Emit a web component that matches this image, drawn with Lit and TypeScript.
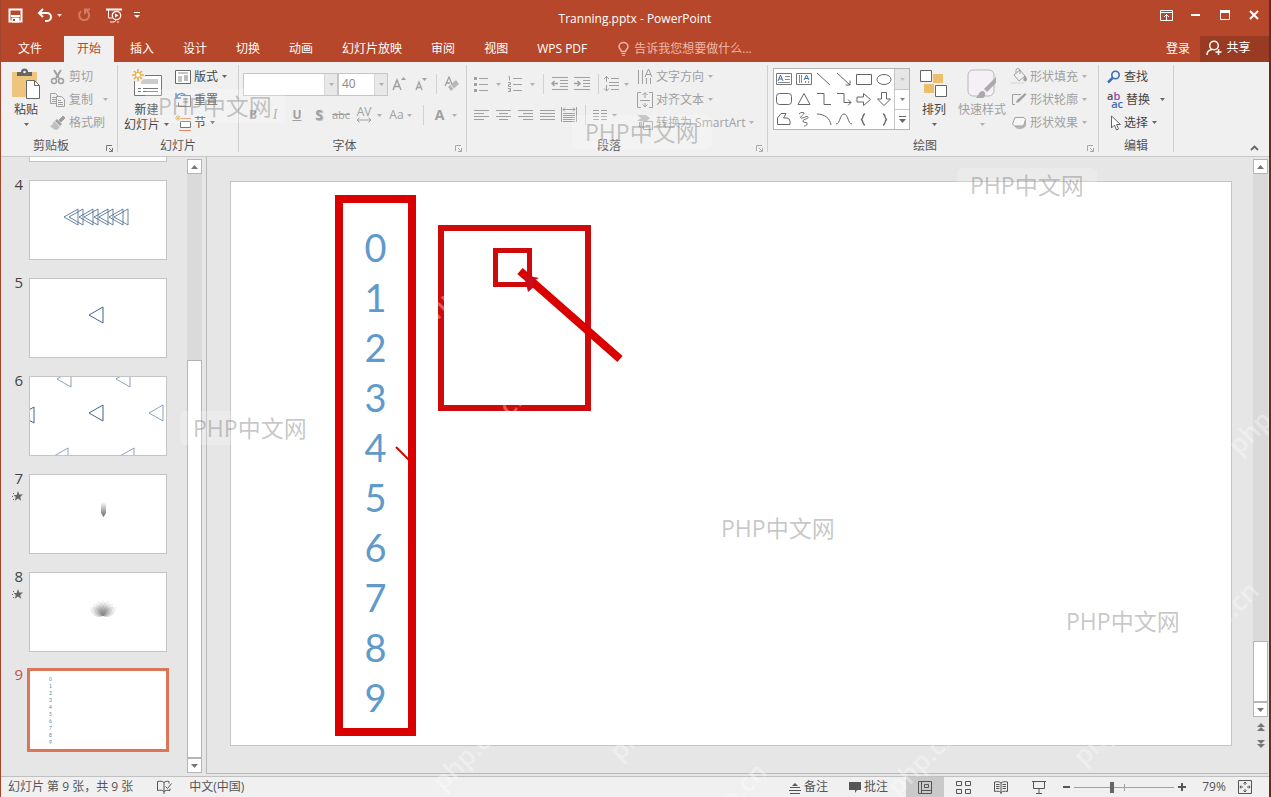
import { LitElement, html, svg, css, nothing, TemplateResult } from "lit";
import { customElement, property } from "lit/decorators.js";

const icon = (w: number, h: number, body: unknown, box = `0 0 ${w} ${h}`) =>
  html`<svg class="icon" width=${w} height=${h} viewBox=${box} fill="none" stroke="currentColor" stroke-width="1" aria-hidden="true">${body}</svg>`;

const caret = () =>
  html`<svg class="caret" width="5" height="3" viewBox="0 0 5 3" aria-hidden="true"><path d="M0 0h5L2.5 3z" fill="currentColor"></path></svg>`;

const rows = (list: number[][]) => svg`${list.map(([x1, x2, y]) => svg`<path d="M${x1} ${y}H${x2}"></path>`)}`;

const icons = {
  save: () => icon(15, 15, svg`<path d="M1.5 1.5h12v12h-12z" stroke-width="2"></path><path d="M3 8h9" stroke-width="2"></path><path d="M4 10h7v4H4z" fill="currentColor"></path><path d="M5 11h2v2H5z" fill="#b7472a" stroke="none"></path>`),
  undo: () => icon(16, 14, svg`<path d="M2 5h8a4 4 0 0 1 0 8H8" stroke-width="2"></path><path d="M6 1 2 5l4 4" stroke-width="2"></path>`),
  redo: () => icon(14, 14, svg`<path d="M9 2.500a5 5 0 1 1-5 .8" stroke-width="2"></path><path d="M8 6V1.500h5" stroke-width="2"></path>`),
  present: () => icon(18, 15, svg`<path d="M1 1.500h16" stroke-width="2"></path><path d="M3.500 2v8h4M5 14h4l2-1.500M12 14h2"></path><circle cx="11.500" cy="7.500" r="4.200" stroke-width="1.300"></circle><path d="M10 5.500v4l3.500-2z" fill="currentColor" stroke="none"></path>`),
  customize: () => icon(6, 7, svg`<path d="M0 .5h6"></path><path d="M0 3h6L3 6z" fill="currentColor" stroke="none"></path>`),
  ribbonOptions: () => icon(13, 11, svg`<path d="M.5.5h12v10H.5zM.5 2.500h12M6.500 10V4.500M4 7l2.500-2.500L9 7"></path>`),
  minimize: () => icon(9, 2, svg`<path d="M0 1h9" stroke-width="2"></path>`),
  maximize: () => icon(10, 10, svg`<path d="M.5.5h9v9h-9z"></path><path d="M0 1.500h10" stroke-width="3"></path>`),
  close: () => icon(10, 10, svg`<path d="m1 1 8 8M9 1 1 9" stroke-width="2"></path>`),
  bulb: () => icon(11, 14, svg`<path d="M3.500 9.500C3.500 8 1 7 1 4.800a4.500 4.200 0 0 1 9 0C10 7 7.500 8 7.500 9.500z" stroke-width="1.500"></path><path d="M3.500 11.500h4M4 13.300h3"></path>`),
  person: () => icon(16, 16, svg`<circle cx="8" cy="5.500" r="4.300" stroke-width="1.500"></circle><path d="M1 15c0-3 2-5 5-5.500M12.500 9v6M9.500 12h6" stroke-width="1.500"></path>`),
  paste: () => icon(28, 30, svg`<path d="M0 3h25v25H0z" fill="#edc57c" stroke="none"></path><path d="M5 7V3h4a3.500 3.500 0 0 1 7 0h4v4z" fill="#666" stroke="none"></path><circle cx="12.500" cy="3" r="1.300" fill="#f0f0f0" stroke="none"></circle><path d="M14.500 11.500h8l5 5v13h-13z" fill="#fff" stroke="#666"></path><path d="M22.500 11.500v5h5" stroke="#666"></path>`),
  cut: () => icon(16, 16, svg`<path d="M4 1l5 8M11 1 6 9" stroke-width="2"></path><circle cx="4" cy="12" r="2.500" stroke-width="1.500"></circle><circle cx="11" cy="12" r="2.500" stroke-width="1.500"></circle>`),
  copy: () => icon(16, 16, svg`<path d="M.5 1.500h5l3 3v7h-8zM2 5.500h4M2 7.500h4M2 9.500h4"></path><path d="M6.500 4.500h5l3 3v7h-8z" fill="#f0f0f0"></path><path d="M8 8.500h3M8 10.500h5M8 12.500h5"></path>`),
  brush: () => icon(16, 16, svg`<path d="m13 1 2 2-4 4-2-2z" fill="currentColor"></path><path d="m7 4 5 5-2 2-5-5z" fill="currentColor" stroke="none"></path><path d="m4 6 6 6-3 3c-3 0-5-2-7-4 2 0 3-3 4-5z" fill="currentColor" stroke="none" opacity=".6"></path>`),
  newSlide: () => icon(32, 30, svg`<path d="M3.500 6.500h27v20h-27z" fill="#fff" stroke="#777"></path><path d="M10 10h17v5H10z" fill="#ccc" stroke="none"></path><path d="M7 19.500h3m2 0h15M7 22.500h3m2 0h15" stroke="#777"></path><circle cx="7" cy="6" r="7" fill="#f0f0f0" stroke="none"></circle><path d="M7 0v12M1 6h12M3 2l8 8M11 2l-8 8" stroke="#e8ac45" stroke-width="1.500"></path><circle cx="7" cy="6" r="2.500" fill="#fff" stroke="#e8ac45"></circle>`),
  layout: () => icon(16, 16, svg`<path d="M.5 1.500h15v13H.5z" fill="#fff" stroke="#666"></path><path d="M3 4h10M3 8h4M3 10h4M3 12h4" stroke="#888"></path><path d="M9 6h4v6H9z" fill="#bbb" stroke="none"></path>`),
  reset: () => icon(16, 16, svg`<path d="M5.500 3.500h10v11H3.500v-4M8 7h5M8 10h5" stroke="#777"></path><path d="M1 1v5h5M1 6c2-5 7-6 10-2" stroke="#4a80bd" stroke-width="1.500"></path>`),
  section: () => icon(16, 16, svg`<path d="M6 3.500h10M4 15.500h12" stroke="#e08b6d"></path><path d="M5.500 6.500h10v6h-10z" fill="#fff" stroke="#777"></path><path d="M3 0v6M0 3h6M1 1l4 4M5 1 1 5" stroke="#e8ac45"></path>`),
  grow: () => icon(14, 16, svg`<path d="M1 14 5 4l4 10M2.500 10.500h5" stroke-width="1.500"></path><path d="M9 4h5l-2.500-3z" fill="currentColor" stroke="none"></path>`),
  shrink: () => icon(14, 16, svg`<path d="M2 14 5 6l3 8M3 11.500h4" stroke-width="1.300"></path><path d="M8 2h5l-2.500 3z" fill="currentColor" stroke="none"></path>`),
  clear: () => icon(16, 16, svg`<path d="M1 10 5 1l3 7M2 7h4" stroke-width="1.300"></path><path d="m4 11 8-7 3 4-8 7z" fill="currentColor" opacity=".7" stroke="none"></path><path d="m7 9 3 4" stroke="#f0f0f0"></path>`),
  spacing: () => icon(16, 6, svg`<path d="M1 3h14M3.500.5 1 3l2.500 2.500M12.500.5 15 3l-2.500 2.500"></path>`),
  bullets: () => icon(14, 16, svg`<path d="M0 1h3v3H0zM0 7h3v3H0zM0 13h3v3H0z" fill="currentColor" stroke="none"></path>${rows([[5, 14, 2.5], [5, 14, 8.5], [5, 14, 14.5]])}`),
  numbering: () => icon(14, 16, svg`<path d="M.5.5h1v4M0 6.500h2.500v2H.5v2H3M0 12.500h2.500v3H0M1 14h1"></path>${rows([[5, 14, 2.5], [5, 14, 8.5], [5, 14, 14.5]])}`),
  outdent: () => icon(17, 14, svg`${rows([[1, 17, 0.5], [9, 17, 3.5], [9, 17, 6.5], [9, 17, 9.5], [1, 17, 12.5]])}<path d="M1 6.500h6M3.500 4 1 6.500 3.500 9" stroke-width="1.500"></path>`),
  indent: () => icon(17, 14, svg`${rows([[0, 16, 0.5], [9, 16, 3.5], [9, 16, 6.5], [9, 16, 9.5], [0, 16, 12.5]])}<path d="M0 6.500h6M3.500 4 6 6.500 3.500 9" stroke-width="1.500"></path>`),
  lineSpacing: () => icon(15, 16, svg`<path d="M2.500 0v6M0 3l2.500-2.500L5 3M2.500 9v6M0 12.500 2.500 15 5 12.500"></path>${rows([[7, 15, 2.5], [5, 15, 6.5], [5, 15, 9.5], [7, 15, 13.5]])}`),
  left: () => icon(15, 11, rows([[0, 15, 0.5], [0, 10, 3.5], [0, 15, 6.5], [0, 10, 9.5]])),
  center: () => icon(15, 11, rows([[0, 15, 0.5], [3, 12, 3.5], [0, 15, 6.5], [3, 12, 9.5]])),
  right: () => icon(15, 11, rows([[0, 15, 0.5], [5, 15, 3.5], [0, 15, 6.5], [5, 15, 9.5]])),
  justify: () => icon(15, 11, rows([[0, 15, 0.5], [0, 15, 3.5], [0, 15, 6.5], [0, 15, 9.5]])),
  distribute: () => icon(16, 16, svg`<path d="M.5 0v15M15.500 0v15M2 2.500h12M4 .5l-2 2 2 2M12 .5l2 2-2 2"></path>${rows([[2, 14, 6.5], [2, 14, 8.5], [2, 14, 10.5], [2, 14, 12.5], [2, 14, 14.5]])}`),
  columns: () => icon(14, 11, rows([[0, 6, 0.5], [0, 6, 3.5], [0, 6, 6.5], [0, 6, 9.5], [8, 14, 0.5], [8, 14, 3.5], [8, 14, 6.5], [8, 14, 9.5]])),
  direction: () => icon(16, 16, svg`<path d="M1.500 1v14M5.500 1v14M9.500 9v6M13.500 9v6M8 8l3.500-8L15 8M9 5.500h5"></path>`),
  alignText: () => icon(16, 16, svg`<path d="M4 .5H.5v15H4M12 .5h3.500v15H12M3 8.500h10M8 1v5M5.500 3 8 .5 10.500 3M8 11v4M5.500 12.500 8 15l2.500-2.500"></path>`),
  smartArt: () => icon(16, 16, svg`<path d="M0 0h9l4 3-3 3H0l4-3z" fill="currentColor" stroke="none" opacity=".7"></path><path d="M2.500 7v5h4M6.500 6.500h9v8h-9zM8.500 10.500h5"></path>`),
  arrange: () => icon(28, 28, svg`<path d="M13 4h10v9H13zM4 14h10v9H4z" fill="#edbf6c" stroke="none"></path><path d="M.5.5h11v11H.5zM15.500 15.500h11v11h-11z" fill="#fff" stroke="#666"></path>`),
  quickStyle: () => icon(30, 30, svg`<rect x="1" y="1" width="26" height="26" rx="5" stroke="#b8b8b8" fill="#f4f0f5"></rect><path d="M29 8v6l-9 9-3-3z" fill="#aaa" stroke="none"></path><path d="M8 29c4-1 3-7 8-7 3 1 3 5 0 7z" fill="#aaa" stroke="none"></path>`),
  fill: () => icon(16, 16, svg`<path d="m3 6 6-5 5 6-6 5z"></path><path d="M5 4V1.500a2 2 0 0 1 4 0V5"></path><path d="M14 7c2 3 2 5 0 5s-1-3 0-5z" fill="currentColor"></path><path d="M0 13h13v2H0z" fill="#e2e2e2" stroke="none"></path>`),
  outline: () => icon(16, 16, svg`<path d="M10 2.500H1.500v10H4"></path><path d="m14 1 1.500 1.500L8 10l-3 1 1-3z" fill="currentColor" stroke="none"></path>`),
  effects: () => icon(16, 16, svg`<path d="M4 8v4c2 3 8 3 11-1V5z" fill="currentColor" stroke="none" opacity=".7"></path><path d="M4 2.500h9l1.500 2-2 6.500h-9L1.500 9z" fill="#f7f7f7"></path>`),
  find: () => icon(14, 14, svg`<circle cx="8.500" cy="5" r="3.700" stroke="#3c6fb0" stroke-width="1.600"></circle><path d="m5.500 8-4.500 4.500" stroke="#3c6fb0" stroke-width="2.500"></path>`),
  pointer: () => icon(14, 16, svg`<path d="M4.500 1v12l3-3 2 5 2-1-2-4.500h4z" fill="#fff" stroke="#666"></path>`),
  spell: () => icon(15, 14, svg`<path d="M7 2.500C5.500 1 3 1 .5 1.500v9c2.500-.5 5-.5 6.500 1M7 2.500c1-1 3-1.500 5-1v2M7 2.500V14M7 11.500c1-1 3-1.500 6-1v-2M8.500 6.500l2 2 4-5"></path>`),
  notes: () => icon(12, 13, svg`<path d="M3 5h6L6 2z" fill="currentColor" stroke="none"></path>${rows([[1, 11, 6.5], [0, 12, 9.5], [1, 11, 12.5]])}`),
  comment: () => icon(12, 12, svg`<path d="M0 1h12v8H8l-2 3v-3H0z" fill="currentColor" stroke="none"></path>`),
  normal: () => icon(14, 13, svg`<path d="M.5.5h13v12H.5zM3.500 1v11M3.500 9.500h10M6.500 3.500h4v3h-4z"></path>`),
  sorter: () => icon(15, 13, svg`<path d="M.5.5h5v4h-5zM9.500.5h5v4h-5zM.5 8.500h5v4h-5zM9.500 8.500h5v4h-5z"></path>`),
  reading: () => icon(14, 13, svg`<path d="M.5 1C3 .5 5.500.5 7 2c1.500-1.500 4-1.500 6.500-1v9.500C11 10 8.500 10 7 11.500 5.500 10 3 10 .5 10.500zM7 2v11M2 3.500h3.500M2 5.500h3.500M2 7.500h3.500M8.500 3.500H12M8.500 5.500H12M8.500 7.500H12"></path>`),
  show: () => icon(14, 13, svg`<path d="M0 .5h14M1.500 1v6.500h11V1M7 8v4M4 12.500h6"></path>`),
  fit: () => icon(14, 14, svg`<path d="M.5.5h13v13H.5zM7 2v3M5.500 3.500 7 2l1.500 1.500M7 12V9M5.500 10.500 7 12l1.500-1.500M2 7h3M3 5.500 2 7l1 1.500M12 7H9M11 5.500 12 7l-1 1.500"></path>`),
  launcher: () => icon(7, 7, svg`<path d="M.5 6V.5H6M3 3l3.500 3.500M6.500 3v3.500H3"></path>`),
  chevronUp: () => icon(9, 6, svg`<path d="M1 5l3.500-3.500L8 5" stroke-width="1.800"></path>`),
  up: () => icon(7, 4, svg`<path d="M0 4h7L3.500 0z" fill="currentColor" stroke="none"></path>`),
  down: () => icon(7, 4, svg`<path d="M0 0h7L3.500 4z" fill="currentColor" stroke="none"></path>`),
  prev: () => icon(8, 8, svg`<path d="M0 4h8L4 0zM0 8h8L4 4z" fill="currentColor" stroke="none"></path>`),
  next: () => icon(8, 8, svg`<path d="M0 0h8L4 4zM0 4h8L4 8z" fill="currentColor" stroke="none"></path>`),
  more: () => icon(7, 7, svg`<path d="M0 .5h7"></path><path d="M0 3h7L3.500 7z" fill="currentColor" stroke="none"></path>`),
  star: () => icon(11, 10, svg`<path d="m6 0 1.300 3.600H11L8.200 5.900l1 3.900L6 7.500 2.800 9.800l1-3.900L1.500 4h3.200z" fill="currentColor" stroke="none"></path><path d="M1 2.500h1M0 5.500h1M1 8.500h1"></path>`),
};

const shapes: TemplateResult[] = [
  svg`<path d="M.5 2.500h15v11H.5z" stroke="#777"></path><path d="m2 10 2.500-6L7 10M3 8h3" stroke="#3c6fb0"></path><path d="M9 5.500h5M9 8.500h5M2 11.500h12" stroke="#888"></path>`,
  svg`<path d="M.5 2.500h15v11H.5z" stroke="#777"></path><path d="m8 9 2.500-5L13 9M9 7.500h3" stroke="#3c6fb0"></path><path d="M3.500 4v8M5.500 4v8M9.500 10v2M12.500 10v2" stroke="#888"></path>`,
  svg`<path d="m1 2 13 12"></path>`,
  svg`<path d="m1 2 13 12M14 9.500V14H9.500"></path>`,
  svg`<path d="M.5 3.500h15v10H.5z"></path>`,
  svg`<ellipse cx="8" cy="8.500" rx="7" ry="5"></ellipse>`,
  svg`<rect x=".5" y="2.500" width="15" height="11" rx="3"></rect>`,
  svg`<path d="m8 2.500 6 11H2z"></path>`,
  svg`<path d="M1 2.500h7v11h7"></path>`,
  svg`<path d="M1 2.500h7v9h7M12 8.500l3 3-3 3"></path>`,
  svg`<path d="M1 6h6.500V2.500L14.500 8.500l-7 6V11H1z"></path>`,
  svg`<path d="M5.500 1.500h5V8h4L8 14.500 1.500 8h4z"></path>`,
  svg`<path d="M1.500 13.500V7L5 2.500h5L7.500 7H11a3.500 3.500 0 0 1 3 3.500v3z"></path>`,
  svg`<path d="M3 3c2-2 4-2 5-1s-5 4-3 5 6-3 7-1-5 2-5 4 3 1 4 2-1 3-3 3"></path>`,
  svg`<path d="M1 3c7 0 13 4 14 11"></path>`,
  svg`<path d="M0 13c4 0 4-10 8-10s4 10 8 10"></path>`,
  svg`<path d="M9 3C6 3 8 8 5 8.500 8 9 6 14 9 14" stroke-width="1.300"></path>`,
  svg`<path d="M7 3c3 0 1 5 4 5.500C8 9 10 14 7 14" stroke-width="1.300"></path>`,
];

const shared = css`
  :host { box-sizing: border-box; }
  *, *::before, *::after { box-sizing: border-box; }
  button, select, input { font: inherit; color: inherit; margin: 0; }
  button {
    display: inline-flex; align-items: center; justify-content: center;
    padding: 0; border: 0; background: none; white-space: nowrap;
  }
  svg { display: block; flex: none; overflow: visible; }
`;

@customElement("ribbon-group")
class RibbonGroup extends LitElement {
  @property() label = "";
  @property({ type: Boolean }) launcher = false;
  @property({ type: Boolean }) dim = false;

  static styles = [shared, css`
    :host {
      display: flex; flex-direction: column; flex: none;
      margin: 3px 0 4px; border-right: 1px solid #cfcfcf;
    }
    .content { display: flex; height: 69px; }
    .footer { display: flex; height: 18px; align-items: flex-start; }
    .label { flex: 1; text-align: center; line-height: 24px; color: #555; }
    .open { width: 16px; height: 22px; padding-top: 7px; color: #777; }
    .open.dim { color: #aaa; }
  `];

  render() {
    return html`
      <div class="content"><slot></slot></div>
      <div class="footer">
        <span class="label">${this.label}</span>
        ${this.launcher ? html`<button class=${this.dim ? "open dim" : "open"} aria-label=${this.label}>${icons.launcher()}</button>` : nothing}
      </div>`;
  }
}

@customElement("scroll-bar")
class ScrollBar extends LitElement {
  @property({ type: Number }) before = 0;
  @property({ type: Number }) size = 1;
  @property({ type: Number }) after = 0;
  @property({ type: Boolean }) paging = false;

  static styles = [shared, css`
    :host { display: flex; flex-direction: column; flex: none; width: 15px; padding: 2px 0 3px; color: #777; }
    .step { flex: none; width: 15px; height: 15px; background: #fff; border: 1px solid #b5b5b5; }
    .track { flex: 1; display: flex; flex-direction: column; background: #dadada; }
    .thumb { background: #fff; border: 1px solid #b5b5b5; }
    .page { flex: none; height: 17px; }
    .pages { display: flex; flex-direction: column; padding: 1px 0 18px; }
  `];

  render() {
    return html`
      <button class="step" aria-label="向上滚动">${icons.up()}</button>
      <div class="track">
        <div style="flex:${this.before}"></div>
        <div class="thumb" style="flex:${this.size}"></div>
        <div style="flex:${this.after}"></div>
      </div>
      <button class="step" aria-label="向下滚动">${icons.down()}</button>
      ${this.paging ? html`<div class="pages">
        <button class="page" aria-label="上一张">${icons.prev()}</button>
        <button class="page" aria-label="下一张">${icons.next()}</button>
      </div>` : nothing}`;
  }
}

@customElement("app-root")
class AppRoot extends LitElement {
  static styles = [shared, css`
    :host {
      display: flex; flex-direction: column; position: relative;
      height: 100vh; overflow: hidden;
      border-left: 1px solid #a4452c; border-right: 2px solid #6b2a1c;
      background: #e6e6e6; color: #444;
      font: 12px/16px "Open Sans", "Noto Sans CJK SC", sans-serif;
    }
    .titlebar { flex: none; display: grid; grid-template-columns: 1fr auto 1fr; height: 36px; background: #b7472a; color: #fff; }
    .quick { display: flex; align-items: center; height: 30px; padding-left: 7px; }
    .quick button:nth-child(2) { margin-left: 14px; gap: 4px; }
    .quick button:nth-child(3) { margin-left: 15px; color: #d27c66; }
    .quick button:nth-child(4) { margin-left: 14px; }
    .quick button:nth-child(5) { margin-left: 3px; width: 22px; }
    .title { font-size: 12px; line-height: 37px; }
    .window { display: flex; justify-content: flex-end; height: 30px; padding-right: 1px; }
    .window button { width: 29px; }
    .tabs { flex: none; display: flex; height: 26px; gap: 3px; background: #b7472a; color: #fff; }
    .tab { height: 26px; padding: 0 13px; }
    .tab.file { margin: 0 6px 0 4px; }
    .tab.active { background: #f0f0f0; color: #b7472a; }
    .tell { display: flex; align-items: center; gap: 5px; margin-left: 15px; color: #eeb9aa; }
    .account { display: flex; gap: 10px; margin-left: auto; }
    .share { width: 69px; gap: 4px; padding: 0 12px 2px 0; background: #983b22; }

    .ribbon { flex: none; display: flex; height: 95px; background: #f0f0f0; border-bottom: 1px solid #c8c8c8; }
    .g-clip { width: 117px; }
    .g-slide { width: 121px; }
    .g-font { width: 228px; }
    .g-para { width: 301px; }
    .g-draw { width: 331px; }
    .g-edit { width: 75px; }
    .collapse { margin: auto 10px 5px auto; color: #666; }
    .big { flex-direction: column; justify-content: flex-start; line-height: 15px; }
    .big .pic { display: flex; align-items: center; justify-content: center; height: 37px; }
    .big .drop { display: flex; align-items: center; gap: 4px; height: 15px; }
    .caret { opacity: 0.8; }
    .paste { width: 42px; margin-left: 4px; }
    .new { width: 55px; margin-left: 1px; }
    .new + .stack { margin-left: 1px; }
    .arrange { width: 46px; }
    .quickstyle { width: 50px; }
    .stack { display: flex; flex-direction: column; align-items: flex-start; }
    .small { height: 23px; gap: 3px; }
    .small .caret { margin-left: 1px; }
    .small.wide .caret { margin-left: 7px; }
    .off { color: #a0a0a0; }
    .pl2 { margin-left: 2px; }
    .pl3 { margin-left: 3px; }
    .pl4 { margin-left: 4px; }
    .pl5 { margin-left: 5px; }
    .pl8 { margin-left: 8px; }
    .rows { display: flex; flex-direction: column; gap: 7px; padding-top: 7px; color: #a0a0a0; }
    .row { display: flex; align-items: center; height: 24px; }
    .row button { height: 22px; }
    .row .sep { width: 1px; height: 20px; background: #d2d2d2; }
    .combo { display: grid; height: 23px; }
    .combo select {
      grid-area: 1 / 1; appearance: none; height: 23px; padding: 0 3px; border: 1px solid #c6c6c6; border-radius: 0;
      background: #fff; color: #888; opacity: 1; font-size: 12px;
    }
    .combo .arrow {
      grid-area: 1 / 1; justify-self: end; display: grid; place-items: center; width: 13px; height: 21px;
      margin: 1px; background: #e8e8e8; border-left: 1px solid #d8d8d8; pointer-events: none;
    }
    .face { width: 95px; margin-left: 4px; }
    .size { width: 50px; }
    .w16 { width: 16px; }
    .w22 { width: 22px; }
    .w29 { width: 29px; gap: 3px; }
    .w34 { width: 34px; gap: 8px; }
    .w30 { width: 30px; }
    .tight { gap: 5px; }
    .bold { font-weight: 700; }
    .italic { font-style: italic; font-family: "Liberation Serif", serif; font-size: 14px; }
    .under { font-weight: 700; text-decoration: underline; }
    .shadow { font-weight: 700; text-shadow: 1px 1px 1px #bbb; font-size: 14px; }
    .strike { text-decoration: line-through; font-size: 11px; }
    .kern { display: flex; flex-direction: column; align-items: center; font-size: 12px; line-height: 10px; }
    .fontcolor { font-weight: 700; font-size: 14px; }
    .gallery { display: flex; width: 137px; height: 62px; margin: 3px 1px 0 5px; background: #fff; border: 1px solid #b5b5b5; color: #666; }
    .shapes { flex: 1; display: grid; grid-template: repeat(3, 20px) / repeat(6, 20px); }
    .scroll { display: grid; grid-template-rows: repeat(3, 1fr); width: 15px; border-left: 1px solid #c6c6c6; }
    .scroll button + button { border-top: 1px solid #c6c6c6; }
    .scroll button:first-child { background: #e6e6e6; color: #bbb; }
    .ab { display: grid; width: 16px; font: 600 11px/8px "Open Sans", sans-serif; color: #555; text-align: left; }
    .ab span + span { color: #3c6fb0; text-align: right; }
    .ab i { font-style: normal; color: #8b4bb0; }

    .main { flex: 1; display: flex; min-height: 0; }
    .thumbs {
      flex: none; display: flex; flex-direction: column; justify-content: flex-end; gap: 18px;
      width: 186px; padding-bottom: 26px; overflow: hidden;
    }
    .thumb { flex: none; display: flex; }
    .num { width: 28px; padding-right: 6px; font-size: 15px; line-height: 8px; text-align: right; }
    .num .icon { margin: 9px 0 0 11px; color: #666; }
    .mini { width: 138px; height: 80px; background: #fff; border: 1px solid #c4c4c4; overflow: hidden; color: #41658d; }
    .selected .num { color: #c9533a; }
    .selected .mini { outline: 3px solid #dd7558; outline-offset: -1px; border-color: #dd7558; }
    .digits-mini { display: flex; flex-direction: column; align-items: flex-start; width: 100%; padding: 2px 0 0 19px; font: 5px/7px Lato, sans-serif; color: #5b83ab; }
    .editor { flex: 1; display: flex; min-width: 0; margin: 0 1px 2px 4px; border-left: 1px solid #b9b9b9; border-bottom: 1px solid #b9b9b9; }
    .desk { flex: 1; display: flex; padding: 24px 21px 27px 23px; }
    .slide { position: relative; flex: 1; background: #fff; border: 1px solid #c4c4c4; }
    .frame { position: absolute; border: 6px solid #ce0a0a; }
    .numbers { left: 104px; top: 13px; width: 81px; height: 541px; border: 8px solid #da0000; padding-top: 19px; text-align: center; font: 38px/50px Lato, sans-serif; color: #5f9acb; }
    .numbers div { height: 50px; }
    .area { left: 207px; top: 43px; width: 153px; height: 186px; }
    .spot { left: 262px; top: 66px; width: 39px; height: 39px; border-width: 5px; }
    .marks { position: absolute; left: 0; top: 0; }

    .status { flex: none; display: flex; align-items: center; height: 21px; background: #f0f0f0; border-top: 1px solid #c0c0c0; padding: 0 17px 0 7px; color: #555; }
    .status button { height: 20px; }
    .proof { margin: 0 17px 0 24px; }
    .right { display: flex; align-items: center; margin-left: auto; }
    .right .text { gap: 3px; margin-right: 21px; }
    .right .text + .text { margin-right: 18px; }
    .view { width: 38px; }
    .view.on { background: #c9c9c9; }
    .zoomstep { width: 16px; }
    .zoom { appearance: none; width: 100px; height: 12px; background: linear-gradient(#a0a0a0, #a0a0a0) center / 100% 1px no-repeat, linear-gradient(#a0a0a0, #a0a0a0) center / 1px 7px no-repeat; }
    .zoom::-webkit-slider-thumb { appearance: none; width: 4px; height: 11px; background: #666; }
    .percent { width: 48px; }

    .stamp {
      position: absolute; padding: 0 13px; border-radius: 6px; pointer-events: none; white-space: nowrap;
      background: rgba(255, 255, 255, 0.22); color: rgba(120, 120, 120, 0.42);
      font-size: 23px; line-height: 34px;
    }
    .tilt {
      position: absolute; pointer-events: none; white-space: nowrap; color: rgba(255, 255, 255, 0.35);
      font-size: 26px; font-weight: 600; line-height: 30px; transform: rotate(-45deg); transform-origin: 0 50%;
    }
  `];

  private stamps = [[144, 89], [571, 115], [956, 168], [179, 411], [707, 511], [1052, 604]];
  private tilts = [[435, 770], [612, 740], [700, 812], [890, 775], [1076, 745], [1231, 434], [1192, 631], [418, 310], [462, 435]];

  private small(label: string, pic: unknown, opts: { off?: boolean; drop?: boolean; wide?: boolean } = {}) {
    return html`<button class="small ${opts.off ? "off" : ""} ${opts.wide ? "wide" : ""}" ?disabled=${opts.off}>
      ${pic}<span>${label}</span>${opts.drop ? caret() : nothing}</button>`;
  }

  private thumb(n: number, body: unknown, star = false, selected = false) {
    return html`<div class="thumb ${selected ? "selected" : ""}">
      <div class="num">${n}${star ? icons.star() : nothing}</div>
      <button class="mini" aria-label="幻灯片 ${n}">${body}</button>
    </div>`;
  }

  private canvas(body: unknown) {
    return html`<svg width="136" height="78" viewBox="0 0 136 78" fill="none" stroke="currentColor" aria-hidden="true">${body}</svg>`;
  }

  private triangle(x: number, y: number, opacity = 1) {
    return svg`<path d="M${x} ${y}l14-8v16z" opacity=${opacity}></path>`;
  }

  render() {
    return html`
      <header class="titlebar">
        <div class="quick">
          <button aria-label="保存">${icons.save()}</button>
          <button aria-label="撤消">${icons.undo()}${caret()}</button>
          <button aria-label="恢复">${icons.redo()}</button>
          <button aria-label="从头开始">${icons.present()}</button>
          <button aria-label="自定义">${icons.customize()}</button>
        </div>
        <div class="title">Tranning.pptx - PowerPoint</div>
        <div class="window">
          <button aria-label="功能区显示选项">${icons.ribbonOptions()}</button>
          <button aria-label="最小化">${icons.minimize()}</button>
          <button aria-label="最大化">${icons.maximize()}</button>
          <button aria-label="关闭">${icons.close()}</button>
        </div>
      </header>
      <nav class="tabs">
        <button class="tab file">文件</button>
        ${["开始", "插入", "设计", "切换", "动画", "幻灯片放映", "审阅", "视图", "WPS PDF"].map(
          (t, i) => html`<button class="tab ${i === 0 ? "active" : ""}">${t}</button>`)}
        <button class="tell">${icons.bulb()}<span>告诉我您想要做什么...</span></button>
        <div class="account">
          <button>登录</button>
          <button class="share">${icons.person()}<span>共享</span></button>
        </div>
      </nav>
      <section class="ribbon">
        <ribbon-group class="g-clip" label="剪贴板" launcher>
          <button class="big paste"><span class="pic">${icons.paste()}</span><span>粘贴</span><span class="drop">${caret()}</span></button>
          <div class="stack pl3">
            ${this.small("剪切", icons.cut(), { off: true })}
            ${this.small("复制", icons.copy(), { off: true, drop: true, wide: true })}
            ${this.small("格式刷", icons.brush(), { off: true })}
          </div>
        </ribbon-group>
        <ribbon-group class="g-slide" label="幻灯片">
          <button class="big new"><span class="pic">${icons.newSlide()}</span><span>新建</span><span class="drop">幻灯片${caret()}</span></button>
          <div class="stack">
            ${this.small("版式", icons.layout(), { drop: true })}
            ${this.small("重置", icons.reset())}
            ${this.small("节", icons.section(), { drop: true })}
          </div>
        </ribbon-group>
        <ribbon-group class="g-font" label="字体" launcher dim>
          <div class="rows">
            <div class="row">
              <label class="combo face"><select aria-label="字体" disabled><option></option></select><span class="arrow">${caret()}</span></label>
              <label class="combo size"><select aria-label="字号" disabled><option>40</option></select><span class="arrow">${caret()}</span></label>
              <button class="w22" aria-label="增大字号">${icons.grow()}</button>
              <button class="w22" aria-label="减小字号">${icons.shrink()}</button>
              <span class="sep pl4"></span>
              <button class="w30" aria-label="清除格式">${icons.clear()}</button>
            </div>
            <div class="row pl3">
              <button class="w22 bold">B</button><button class="w22 italic">I</button>
              <button class="w22 under">U</button><button class="w22 shadow">S</button>
              <button class="w22 strike">abc</button>
              <button class="w34 tight"><span class="kern">AV${icons.spacing()}</span>${caret()}</button>
              <button class="w29">Aa${caret()}</button>
              <span class="sep pl8"></span>
              <button class="w34 pl5 fontcolor">A${caret()}</button>
            </div>
          </div>
        </ribbon-group>
        <ribbon-group class="g-para" label="段落" launcher dim>
          <div class="rows">
            <div class="row pl3">
              <button class="w34" aria-label="项目符号">${icons.bullets()}${caret()}</button>
              <button class="w34" aria-label="编号">${icons.numbering()}${caret()}</button>
              <span class="sep pl5"></span>
              <button class="w30" aria-label="减少缩进">${icons.outdent()}</button>
              <button class="w16" aria-label="增加缩进">${icons.indent()}</button>
              <span class="sep pl8"></span>
              <button class="w34 tight" aria-label="行距">${icons.lineSpacing()}${caret()}</button>
            </div>
            <div class="row pl3">
              <button class="w22" aria-label="左对齐">${icons.left()}</button>
              <button class="w22" aria-label="居中">${icons.center()}</button>
              <button class="w22" aria-label="右对齐">${icons.right()}</button>
              <button class="w22" aria-label="两端对齐">${icons.justify()}</button>
              <button class="w22" aria-label="分散对齐">${icons.distribute()}</button>
              <span class="sep pl5"></span>
              <button class="w34 pl2 tight" aria-label="分栏">${icons.columns()}${caret()}</button>
            </div>
          </div>
          <div class="stack pl4">
            ${this.small("文字方向", icons.direction(), { off: true, drop: true })}
            ${this.small("对齐文本", icons.alignText(), { off: true, drop: true })}
            ${this.small("转换为 SmartArt", icons.smartArt(), { off: true, drop: true })}
          </div>
        </ribbon-group>
        <ribbon-group class="g-draw" label="绘图" launcher dim>
          <div class="gallery">
            <div class="shapes">${shapes.map((s) => html`<button aria-label="形状">${icon(16, 16, s)}</button>`)}</div>
            <div class="scroll">
              <button aria-label="上一行">${caret()}</button>
              <button aria-label="下一行">${caret()}</button>
              <button aria-label="其他">${icons.more()}</button>
            </div>
          </div>
          <button class="big arrange"><span class="pic">${icons.arrange()}</span><span>排列</span><span class="drop">${caret()}</span></button>
          <button class="big quickstyle off" disabled><span class="pic">${icons.quickStyle()}</span><span>快速样式</span><span class="drop">${caret()}</span></button>
          <div class="stack pl4">
            ${this.small("形状填充", icons.fill(), { off: true, drop: true })}
            ${this.small("形状轮廓", icons.outline(), { off: true, drop: true })}
            ${this.small("形状效果", icons.effects(), { off: true, drop: true })}
          </div>
        </ribbon-group>
        <ribbon-group class="g-edit" label="编辑">
          <div class="stack pl8">
            ${this.small("查找", icons.find())}
            ${this.small("替换", html`<span class="ab"><span>a<i>b</i></span><span>ac</span></span>`, { drop: true, wide: true })}
            ${this.small("选择", icons.pointer(), { drop: true })}
          </div>
        </ribbon-group>
        <button class="collapse" aria-label="折叠功能区">${icons.chevronUp()}</button>
      </section>
      <main class="main">
        <div class="thumbs">
          ${this.thumb(3, nothing)}
          ${this.thumb(4, this.canvas([34, 39, 49, 54, 64, 69, 79, 84].map((x) => this.triangle(x, 36, 0.8))))}
          ${this.thumb(5, this.canvas(this.triangle(59, 36)))}
          ${this.thumb(6, this.canvas(svg`${this.triangle(59, 36)}${this.triangle(119, 36, 0.6)}${this.triangle(-10, 38)}${this.triangle(27, 2, 0.6)}${this.triangle(86, 2, 0.6)}${this.triangle(24, 79, 0.6)}${this.triangle(90, 79, 0.6)}`))}
          ${this.thumb(7, this.canvas(svg`<defs><linearGradient id="fade" x2="0" y2="1"><stop offset="0" stop-color="#fff"></stop><stop offset="1" stop-color="#666"></stop></linearGradient></defs><path d="M71 27h5v11l-2.500 4-2.500-4z" fill="url(#fade)" stroke="none"></path>`), true)}
          ${this.thumb(8, this.canvas(svg`<defs><linearGradient id="petal" x2="0" y2="1"><stop offset="0" stop-color="#999" stop-opacity=".08"></stop><stop offset="1" stop-color="#777" stop-opacity=".4"></stop></linearGradient></defs>${[-58, -38, -18, 0, 18, 38, 58].map((a) => svg`<path d="M73 27c6 6 5 13 0 16-5-3-6-10 0-16z" fill="url(#petal)" stroke="none" transform="rotate(${a} 73 43)"></path>`)}`), true)}
          ${this.thumb(9, html`<div class="digits-mini">${[0, 1, 2, 3, 4, 5, 6, 7, 8, 9].map((d) => html`<span>${d}</span>`)}</div>`, false, true)}
        </div>
        <scroll-bar before="187" size="399" after="0"></scroll-bar>
        <div class="editor">
          <div class="desk">
            <div class="slide">
              <div class="frame numbers">${[0, 1, 2, 3, 4, 5, 6, 7, 8, 9].map((d) => html`<div>${d}</div>`)}</div>
              <div class="frame area"></div>
              <div class="frame spot"></div>
              <svg class="marks" width="420" height="300" fill="none" stroke="#da0000" aria-hidden="true">
                <path d="M289 89 389 177" stroke-width="8"></path>
                <path d="m293 93 15 3-6 3 1 6-6 5z" fill="#c80c1c" stroke="none"></path>
                <path d="m165 265 13 13" stroke-width="2"></path>
              </svg>
            </div>
          </div>
          <scroll-bar before="470" size="59" after="0" paging></scroll-bar>
        </div>
      </main>
      <footer class="status">
        <span>幻灯片 第 9 张，共 9 张</span>
        <button class="proof" aria-label="拼写检查">${icons.spell()}</button>
        <button>中文(中国)</button>
        <div class="right">
          <button class="text">${icons.notes()}<span>备注</span></button>
          <button class="text">${icons.comment()}<span>批注</span></button>
          <button class="view on" aria-label="普通视图">${icons.normal()}</button>
          <button class="view" aria-label="幻灯片浏览">${icons.sorter()}</button>
          <button class="view" aria-label="阅读视图">${icons.reading()}</button>
          <button class="view" aria-label="幻灯片放映">${icons.show()}</button>
          <button class="zoomstep" aria-label="缩小">${icon(7, 2, svg`<path d="M0 1h7" stroke-width="2"></path>`)}</button>
          <input class="zoom" type="range" min="0" max="100" value="38" aria-label="缩放" />
          <button class="zoomstep" aria-label="放大">${icon(8, 8, svg`<path d="M0 4h8M4 0v8" stroke-width="2"></path>`)}</button>
          <button class="percent">79%</button>
          <button aria-label="适应窗口">${icons.fit()}</button>
        </div>
      </footer>
      ${this.tilts.map(([x, y]) => html`<div class="tilt" style="left:${x}px;top:${y}px">php.cn</div>`)}
      ${this.stamps.map(([x, y]) => html`<div class="stamp" style="left:${x}px;top:${y}px">PHP中文网</div>`)}
    `;
  }
}
